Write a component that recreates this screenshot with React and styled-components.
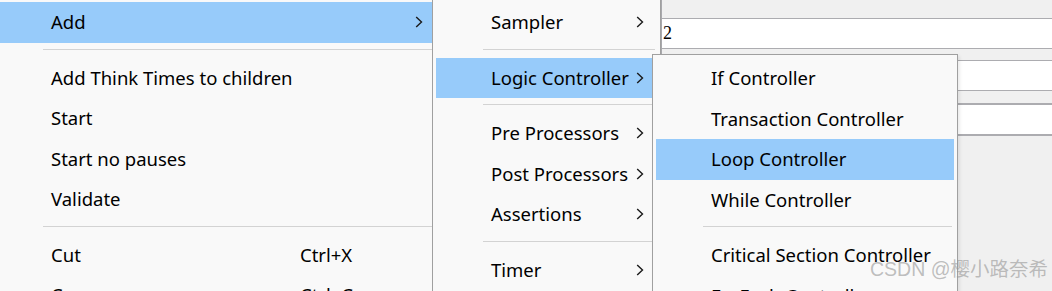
import styled, { createGlobalStyle } from 'styled-components';

const GlobalStyle = createGlobalStyle`
  html, body {
    margin: 0;
    padding: 0;
    width: 1052px;
    height: 291px;
    overflow: hidden;
    background: #f0f0f0;
  }
  * {
    box-sizing: border-box;
  }
`;

const Page = styled.div`
  position: relative;
  width: 1052px;
  height: 291px;
  overflow: hidden;
  display: grid;
  grid-template-columns: 661px 1fr;
  background: #f0f0f0;
  font-family: 'Noto Sans', 'Open Sans', sans-serif;
`;

const TreeArea = styled.div`
  background: #ffffff;
`;

const FormPanel = styled.div`
  border-left: 1px solid #a9a9ad;
  padding-top: 18px;
  display: flex;
  flex-direction: column;
`;

const Field = styled.div`
  height: ${(p) => (p.thick ? 33 : 31)}px;
  margin-bottom: ${(p) => p.gap || 0}px;
  background: #ffffff;
  border-top: ${(p) => (p.thick ? 2 : 1)}px solid #acacb0;
  border-bottom: ${(p) => (p.thick ? 2 : 1)}px solid #acacb0;
  font-family: 'Liberation Serif', 'DejaVu Serif', serif;
  font-size: 18px;
  line-height: 28px;
  padding-left: 1px;
  color: #000;
`;

const Menu = styled.div`
  position: absolute;
  left: ${(p) => p.x}px;
  top: ${(p) => p.y}px;
  width: ${(p) => p.w}px;
  background: #f9f9f9;
  border: 1px solid #a0a0a0;
  padding: 3px;
  box-shadow: ${(p) => (p.shadow ? '2px 2px 3px rgba(0,0,0,0.08)' : 'none')};
`;

const Item = styled.div`
  height: 40.5px;
  display: grid;
  grid-template-columns: ${(p) => p.labelWidth || 0}px 1fr 22px;
  align-items: center;
  padding-left: 55px;
  background: ${(p) => (p.active ? '#97cbfa' : 'transparent')};
  color: #000;
  font-size: 18.5px;
  white-space: nowrap;
`;

const Label = styled.span`
  line-height: 1;
`;

const Shortcut = styled.span`
  line-height: 1;
`;

const Arrow = styled.span`
  display: flex;
  align-items: center;
  justify-content: flex-start;
`;

const Separator = styled.div`
  height: 1px;
  margin: 6px 2px 8px 47px;
  background: #d3d3d3;
`;

const Watermark = styled.div`
  position: absolute;
  right: 4px;
  bottom: 9px;
  font-family: 'Liberation Sans', 'Noto Sans CJK SC', sans-serif;
  font-size: 19.5px;
  color: rgba(150, 150, 150, 0.6);
  white-space: nowrap;
`;

function Chevron() {
  return (
    <svg width="8" height="12" viewBox="0 0 8 12">
      <polyline
        points="1.2,1 6.5,6 1.2,11"
        fill="none"
        stroke="#1a1a1a"
        strokeWidth="1.4"
      />
    </svg>
  );
}

function MenuItem({ label, shortcut, sub, active, labelWidth }) {
  return (
    <Item active={active} labelWidth={labelWidth}>
      <Label>{label}</Label>
      <Shortcut>{shortcut}</Shortcut>
      <Arrow>{sub && <Chevron />}</Arrow>
    </Item>
  );
}

const mainMenu = [
  { label: 'Add', sub: true, active: true },
  'sep',
  { label: 'Add Think Times to children' },
  { label: 'Start' },
  { label: 'Start no pauses' },
  { label: 'Validate' },
  'sep',
  { label: 'Cut', shortcut: 'Ctrl+X' },
  { label: 'Copy', shortcut: 'Ctrl+C' },
];

const addMenu = [
  { label: 'Sampler', sub: true },
  'sep',
  { label: 'Logic Controller', sub: true, active: true },
  'sep',
  { label: 'Pre Processors', sub: true },
  { label: 'Post Processors', sub: true },
  { label: 'Assertions', sub: true },
  'sep',
  { label: 'Timer', sub: true },
];

const logicMenu = [
  { label: 'If Controller' },
  { label: 'Transaction Controller' },
  { label: 'Loop Controller', active: true },
  { label: 'While Controller' },
  'sep',
  { label: 'Critical Section Controller' },
  { label: 'ForEach Controller' },
];

function renderItems(items, labelWidth) {
  return items.map((it, i) =>
    it === 'sep' ? (
      <Separator key={i} />
    ) : (
      <MenuItem key={i} {...it} labelWidth={labelWidth} />
    )
  );
}

export default function App() {
  return (
    <>
      <GlobalStyle />
      <Page>
        <TreeArea />
        <FormPanel>
          <Field gap={11}>2</Field>
          <Field gap={12} />
          <Field thick />
        </FormPanel>

        <Menu x={-8} y={-2} w={449}>
          {renderItems(mainMenu, 249)}
        </Menu>
        <Menu x={432} y={-2} w={229}>
          {renderItems(addMenu, 145)}
        </Menu>
        <Menu x={652} y={54} w={306} shadow>
          {renderItems(logicMenu, 200)}
        </Menu>

        <Watermark>CSDN @樱小路奈希</Watermark>
      </Page>
    </>
  );
}
